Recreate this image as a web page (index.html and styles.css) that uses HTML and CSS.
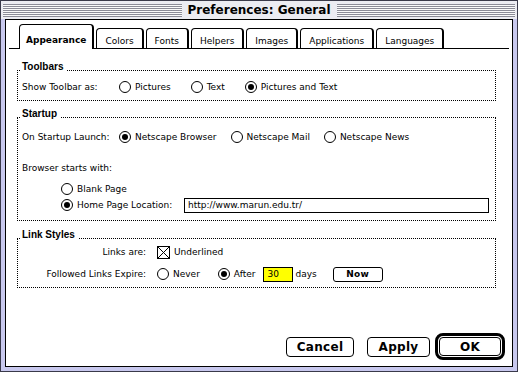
FILE: index.html
```html
<!doctype html>
<html lang="en">
  <head>
    <meta charset="UTF-8" />
    <title>Preferences: General</title>
    <link rel="stylesheet" href="styles.css">
  </head>
  <body>
    <div class="window">
      <div class="titlebar">
        <span class="stripes"></span>
        <span class="title">Preferences: General</span>
        <span class="stripes"></span>
      </div>

      <div class="panel">
        <div class="tabs">
          <div class="tab active">Appearance</div>
          <div class="tab">Colors</div>
          <div class="tab">Fonts</div>
          <div class="tab">Helpers</div>
          <div class="tab">Images</div>
          <div class="tab">Applications</div>
          <div class="tab">Languages</div>
        </div>

        <fieldset class="group toolbars">
          <legend>Toolbars</legend>
          <div class="row">
            <span class="label">Show Toolbar as:</span>
            <div class="options wide">
              <label class="option"><span class="radio"></span>Pictures</label>
              <label class="option"><span class="radio"></span>Text</label>
              <label class="option"><span class="radio on"></span>Pictures and Text</label>
            </div>
          </div>
        </fieldset>

        <fieldset class="group startup">
          <legend>Startup</legend>
          <div class="row">
            <span class="label">On Startup Launch:</span>
            <div class="options">
              <label class="option"><span class="radio on"></span>Netscape Browser</label>
              <label class="option"><span class="radio"></span>Netscape Mail</label>
              <label class="option"><span class="radio"></span>Netscape News</label>
            </div>
          </div>
          <div class="row starts-with">Browser starts with:</div>
          <div class="row indent blank">
            <label class="option"><span class="radio"></span>Blank Page</label>
          </div>
          <div class="row indent">
            <label class="option home"><span class="radio on"></span>Home Page Location:</label>
            <div class="field url">http://www.marun.edu.tr/</div>
          </div>
        </fieldset>

        <fieldset class="group links">
          <legend>Link Styles</legend>
          <div class="links-grid">
            <span class="label right">Links are:</span>
            <div class="row short">
              <label class="option">
                <svg class="checkbox" width="13" height="13" viewBox="0 0 13 13">
                  <rect x="0.5" y="0.5" width="12" height="12" fill="#fff" stroke="#000" />
                  <path d="M1 1 L12 12 M12 1 L1 12" stroke="#000" stroke-width="1" />
                </svg>
                Underlined
              </label>
            </div>
            <span class="label right">Followed Links Expire:</span>
            <div class="row">
              <label class="option"><span class="radio"></span>Never</label>
              <label class="option after"><span class="radio on"></span>After</label>
              <div class="field days">30</div>
              <span class="days-label">days</span>
              <button class="btn small">Now</button>
            </div>
          </div>
        </fieldset>

        <div class="actions">
          <button class="btn">Cancel</button>
          <button class="btn">Apply</button>
          <span class="default-ring"><button class="btn">OK</button></span>
        </div>
      </div>
    </div>
  </body>
</html>
```

FILE: styles.css
```css
* {
  margin: 0;
  padding: 0;
  box-sizing: border-box;
}

body {
  font-family: "DejaVu Sans", sans-serif;
  font-size: 9px;
  color: #000;
  background: #fff;
}

.window {
  width: 518px;
  height: 372px;
  display: flex;
  flex-direction: column;
  background: #c8c8ee;
  border: 1px solid #3a3a4a;
}

.titlebar {
  height: 18px;
  display: flex;
  align-items: center;
  gap: 6px;
  padding: 0 2px;
  background: #ececf2;
}

.stripes {
  flex: 1;
  height: 13px;
  background: repeating-linear-gradient(
    to bottom,
    #8c8c98 0 1px,
    #fafafa 1px 2px
  );
}

.title {
  font: bold 12px "DejaVu Sans", sans-serif;
}

.panel {
  flex: 1;
  margin: 0 4px 4px;
  background: #fff;
  border: 1px solid #000;
  display: flex;
  flex-direction: column;
}

/* tabs */
.tabs {
  display: flex;
  align-items: flex-end;
  gap: 2px;
  height: 25px;
  margin: 4px 3px 0;
  padding-left: 10px;
  border-bottom: 1px solid #000;
}

.tab {
  height: 20px;
  padding: 4px 8px 0;
  border: 1px solid #000;
  border-bottom: 0;
  border-right-width: 2px;
  border-radius: 4px 4px 0 0;
  display: flex;
  align-items: center;
}

.tab.active {
  height: 25px;
  margin-bottom: -1px;
  padding: 5px 6px 0;
  background: #fff;
  font-weight: bold;
}

/* groups */
.group {
  border: 1px dotted #000;
  margin: 0 16px 0 11px;
  padding: 1px 0 5px 4px;
  min-width: 0;
}

.group legend {
  font: bold 10px "Liberation Sans", sans-serif;
  line-height: 10px;
  padding: 0 3px 6px 2px;
  margin-left: -2px;
}

.toolbars {
  margin-top: 13px;
}

.startup {
  margin-top: 8px;
  padding-top: 4px;
  padding-bottom: 7px;
}

.links {
  margin-top: 9px;
  padding-top: 0;
  padding-bottom: 5px;
}

.row {
  display: flex;
  align-items: center;
  height: 16px;
}

.label {
  width: 97px;
  flex-shrink: 0;
}

.options {
  display: flex;
  gap: 14px;
}

.options.wide {
  gap: 20px;
}

.option {
  display: flex;
  align-items: center;
  gap: 4px;
}

.radio {
  width: 12px;
  height: 12px;
  border: 1px solid #000;
  border-radius: 50%;
  display: flex;
  align-items: center;
  justify-content: center;
}

.radio.on::after {
  content: "";
  width: 6px;
  height: 6px;
  border-radius: 50%;
  background: #000;
}

.starts-with {
  margin-top: 15px;
}

.indent {
  padding-left: 39px;
}

.blank {
  margin-top: 5px;
}

.home {
  width: 123px;
}

.field {
  height: 15px;
  border: 1px solid #000;
  display: flex;
  align-items: center;
  padding-left: 3px;
}

.url {
  width: 305px;
}

/* link styles */
.links-grid {
  display: grid;
  grid-template-columns: 124px auto;
  column-gap: 11px;
  align-items: center;
}

.links-grid .row {
  margin-top: 8px;
}

.links-grid .row.short {
  height: 12px;
  margin-top: 0;
}

.label.right {
  width: auto;
  text-align: right;
}

.links-grid .label:nth-of-type(2) {
  margin-top: 8px;
}

.checkbox {
  display: block;
}

.after {
  margin-left: 18px;
}

.days {
  width: 30px;
  margin-left: 8px;
  background: #ffff00;
}

.days-label {
  margin-left: 2px;
}

/* buttons */
.btn {
  font: bold 12px "DejaVu Sans", sans-serif;
  letter-spacing: 0.3px;
  height: 20px;
  background: #fff;
  color: #000;
  border: 1px solid #000;
  border-radius: 4px;
}

.btn.small {
  font-size: 9px;
  height: 15px;
  width: 50px;
  margin-left: 16px;
  border-radius: 3px;
}

.actions {
  margin-top: auto;
  display: flex;
  justify-content: flex-end;
  align-items: center;
  gap: 13px;
  padding: 0 7px 6px 0;
}

.actions .btn {
  width: 68px;
}

.actions .btn:nth-child(2) {
  width: 63px;
}

.default-ring {
  margin-left: -8px;
  border: 3px solid #000;
  border-radius: 8px;
  padding: 1px;
  display: flex;
}

.default-ring .btn {
  width: 62px;
  height: 19px;
}
```
